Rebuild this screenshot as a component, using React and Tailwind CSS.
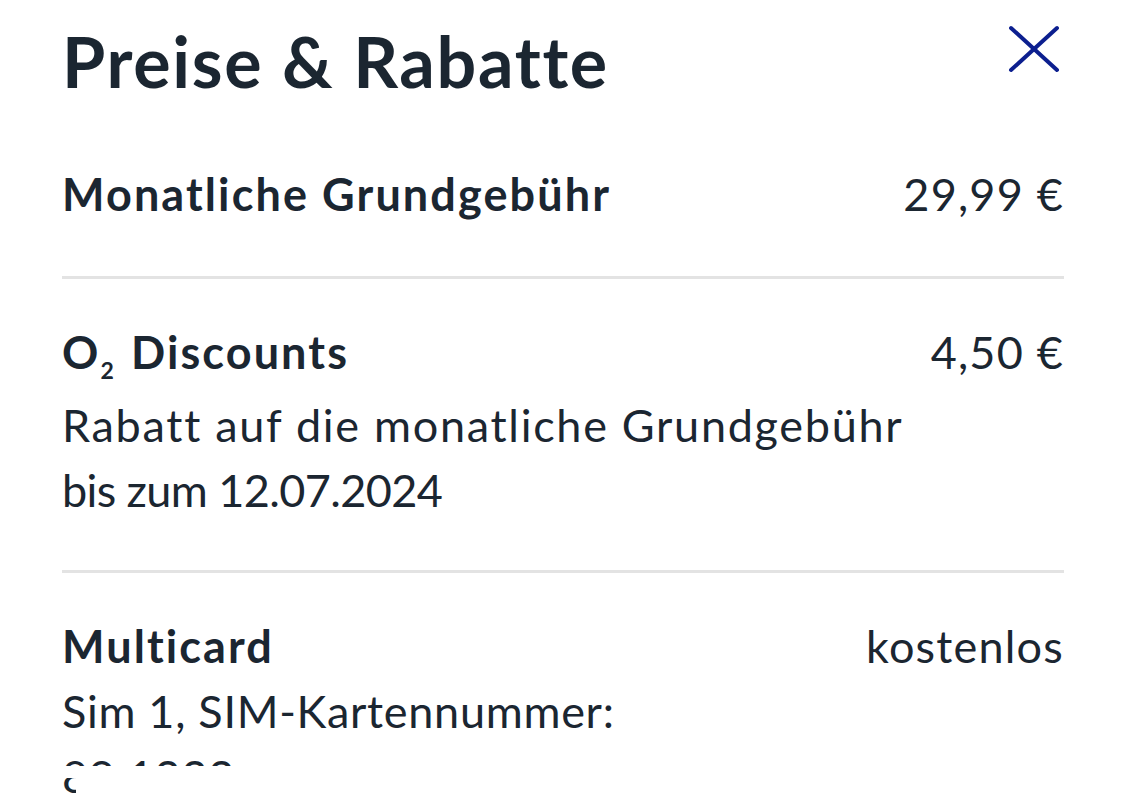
const font = { fontFamily: "Lato, 'Noto Sans', sans-serif" };

const Row = ({ title, price, lines = [], last = false, first = false, children }) => (
  <div
    className={`${first ? "pt-[42px] pb-[49px]" : "pt-[41px] pb-[47px]"} ${
      last ? "pb-0" : "border-b-[3px] border-[#e3e3e3]"
    }`}
  >
    <div className="flex justify-between items-start">
      <div className="text-[45px] leading-[65px] font-bold tracking-[2.1px]">{title}</div>
      <div className="text-[45px] leading-[65px] tracking-[1.2px]">{price}</div>
    </div>
    {lines.map((l) => (
      <div key={l.text} className={`text-[45px] leading-[65px] ${l.track}`}>
        {l.text}
      </div>
    ))}
    {children}
  </div>
);

const CloseIcon = () => (
  <svg width="52" height="48" viewBox="0 0 52 48" fill="none" stroke="#0c1f8f" strokeWidth="4" strokeLinecap="round">
    <line x1="3" y1="3" x2="49" y2="45" />
    <line x1="49" y1="3" x2="3" y2="45" />
  </svg>
);

export default function App() {
  return (
    <div style={font} className="w-[1125px] h-[812px] overflow-hidden bg-white text-[#1b2631]">
      <div className="pl-[62px] pr-[61px]">
        <div className="flex justify-between items-start pt-[19px]">
          <h1 className="text-[70px] leading-[84px] font-bold tracking-[1.7px]">Preise &amp; Rabatte</h1>
          <button className="mt-[6px] mr-[4px]">
            <CloseIcon />
          </button>
        </div>

        <div className="mt-[17px]">
          <Row first title="Monatliche Grundgebühr" price="29,99 €" />
        </div>

        <Row
          title={
            <span>
              O<span className="text-[23px] relative top-[10px] mr-[2px]">2</span> Discounts
            </span>
          }
          price="4,50 €"
          lines={[
            { text: "Rabatt auf die monatliche Grundgebühr", track: "tracking-[1.7px]" },
            { text: "bis zum 12.07.2024", track: "tracking-[-0.6px]" },
          ]}
        />

        <Row
          last
          title="Multicard"
          price="kostenlos"
          lines={[{ text: "Sim 1, SIM-Kartennummer:", track: "tracking-[0.7px]" }]}
        >
          <div className="h-[22px] overflow-hidden text-[45px] leading-[65px] tracking-[0.7px]">89 1222</div>
          <div className="mt-[12px] w-[14px] h-[17px] overflow-hidden">
            <div className="-mt-[34px] text-[45px] leading-[65px]">8</div>
          </div>
        </Row>
      </div>
    </div>
  );
}
